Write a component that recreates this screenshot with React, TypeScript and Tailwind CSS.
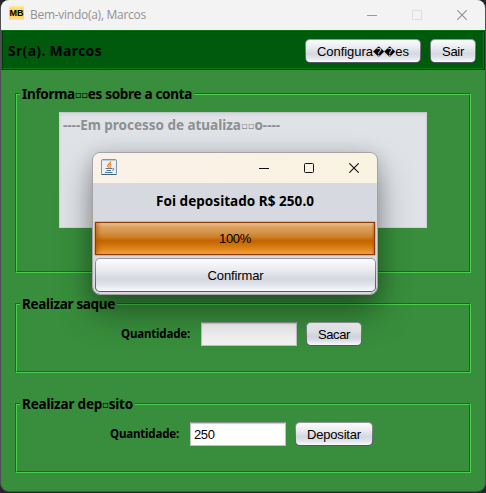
import { useLayoutEffect, useRef, type ReactNode } from 'react';

const TREB = "font-['Noto_Sans','Open_Sans',sans-serif] font-bold";
const ARIAL = "font-['Liberation_Sans','DejaVu_Sans',sans-serif]";

/* Spreads a label's characters over a given width in pixels. */
function Fit({ width, chars, className = '', children }: { width: number; chars: number; className?: string; children: ReactNode }) {
  const ref = useRef<HTMLSpanElement>(null);
  useLayoutEffect(() => {
    const el = ref.current;
    if (!el) return;
    const apply = () => {
      el.style.letterSpacing = '0px';
      const natural = el.getBoundingClientRect().width;
      el.style.letterSpacing = `${(width - natural) / chars}px`;
    };
    apply();
    document.fonts.ready.then(apply);
  }, [width, chars]);
  return (
    <span ref={ref} className={`inline-block whitespace-pre ${className}`}>
      {children}
    </span>
  );
}

const Tofu = () => <span className="align-[1px] font-['DejaVu_Sans'] text-[10px] leading-none font-bold">▫</span>;

function Button({ className = '', children }: { className?: string; children: ReactNode }) {
  return (
    <button
      className={`flex shrink-0 items-center justify-center rounded-[5px] bg-linear-to-b from-[#96999f] to-[#53565e] p-px ${ARIAL} text-[13px] leading-none text-black ${className}`}
    >
      <span className="flex h-full w-full items-center justify-center rounded-[4px] bg-[linear-gradient(#fcfcfd_0%,#e9ebef_35%,#d5d8e0_62%,#dee1e8_78%,#f8fafd_100%)]">
        {children}
      </span>
    </button>
  );
}

function Group({ title, className = '', children }: { title: ReactNode; className?: string; children?: ReactNode }) {
  return (
    <section className={`w-[456px] shrink-0 border border-t-[#246328] border-r-[#4bce50] border-b-[#4bce50] border-l-[#246328] ${className}`}>
      <div className="h-full border border-t-[#4bce50] border-r-[#246328] border-b-[#246328] border-l-[#4bce50]">
        <h2 className={`-mt-[11px] ml-[3px] flex h-5 w-max items-center bg-[#388e3c] px-[2px] text-[13.5px] leading-5 ${TREB}`}>{title}</h2>
        {children}
      </div>
    </section>
  );
}

function Field({ value = '', className = '' }: { value?: string; className?: string }) {
  return (
    <div className={`flex h-6 w-24 items-center border border-[#c0c1c4] border-t-[#8d8e91] pl-[3px] text-[13px] leading-none shadow-[inset_0_1px_1px_#c9cacc] ${ARIAL} ${className}`}>
      {value && <Fit width={20.5} chars={3}>{value}</Fit>}
    </div>
  );
}

function JavaIcon() {
  return (
    <svg className="-mt-px h-4 w-4" viewBox="0 0 16 16" fill="none">
      <rect x=".5" y=".5" width="15" height="15" rx="1" fill="#edf1f4" stroke="#7d95a6" />
      <path d="M1 1.500h14" stroke="#c3ced6" />
      <path d="M.5 15.500h15" stroke="#3f627b" />
      <path d="M9.600 2.500C9.800 4.500 6.200 5 6.700 7c.2.800.8 1 1 1.600M10.300 5C8.600 5.800 8.800 6.500 9.200 7.200c.3.600 0 1-.500 1.300" stroke="#e8791b" strokeWidth="1.200" />
      <path d="M4.500 9.500h6.500M5.500 11.500h4.500M11.500 9.500c1.900-.600 2.200 1.200-.300 1.800M4 13.500h7.500" stroke="#527997" />
    </svg>
  );
}

function Dialog() {
  return (
    <div className="absolute top-[152px] left-[92px] h-[143px] w-[286px] overflow-hidden rounded-[8px] border border-[#a5a4a3] bg-[#d6d9e0] bg-clip-padding shadow-[0_18px_34px_rgba(0,0,0,0.36),0_2px_18px_rgba(0,0,0,0.17)]">
      <div className="flex h-[30px] items-center bg-linear-to-r from-[#faf1e8] to-[#f9f3e1] pr-[18px] pb-px pl-2">
        <JavaIcon />
        <svg className="mr-[35px] ml-auto h-[10px] w-[10px]" viewBox="0 0 10 10"><path d="M0 5.500h10" stroke="#111" /></svg>
        <svg className="mr-[35px] h-[10px] w-[10px]" viewBox="0 0 10 10"><rect x=".5" y=".5" width="9" height="9" rx="1" fill="none" stroke="#111" /></svg>
        <svg className="h-[10px] w-[10px]" viewBox="0 0 10 10"><path d="m.3.300 9.400 9.400m0-9.400-9.400 9.400" stroke="#111" strokeWidth="1.100" /></svg>
      </div>
      <div className={`flex h-[37px] items-center justify-center text-[13.5px] ${TREB}`}>
        <Fit width={158} chars={23}>Foi depositado R$ 250.0</Fit>
      </div>
      <div className="mx-px mt-px h-[35px] rounded-[2px] bg-[#d6b591] p-px">
        <div className={`flex h-[33px] items-center justify-center border border-[#8f3c03] bg-[linear-gradient(#edc99f_0%,#dba363_12%,#d49447_30%,#ce7e24_46%,#c46400_57%,#cd7308_70%,#e58b23_88%,#faa944_100%)] text-[13px] shadow-[inset_4px_0_4px_-2px_rgba(170,75,0,0.6),inset_-2px_0_2px_-1px_rgba(170,75,0,0.5)] ${ARIAL}`}>
          <Fit width={32} chars={4}>100%</Fit>
        </div>
      </div>
      <Button className="mr-px ml-[2px] mt-[2px] h-[34px] w-[281px]"><Fit width={56} chars={9}>Confirmar</Fit></Button>
    </div>
  );
}

export default function App() {
  return (
    <div className="relative h-[493px] w-[486px] overflow-hidden bg-[#25232e] text-black">
      <div className="h-[492px] rounded-[9px] border-x border-[#504f54] bg-[#504f54]">
        <main className="flex h-[491px] flex-col overflow-hidden rounded-[8px] bg-[#388e3c]">
          <header className="flex h-[30px] shrink-0 items-center bg-[#f3f3f3] pr-[18px] pb-px pl-2">
            <div className="mb-[3px] flex h-[14px] w-[15px] items-center justify-center bg-linear-to-b from-[#ffe9a0] via-[#fbc618] to-[#ffe38c] font-['Liberation_Sans',sans-serif] text-[9px] leading-none font-bold">MB</div>
            <Fit width={116} chars={20} className="ml-[6px] pt-px font-['Open_Sans',sans-serif] text-[12px] leading-[28px] text-[#929292]">Bem-vindo(a), Marcos</Fit>
            <svg className="mr-[35px] ml-auto h-[10px] w-[10px]" viewBox="0 0 10 10"><path d="M0 5.500h10" stroke="#999" /></svg>
            <svg className="mr-[35px] h-[10px] w-[10px]" viewBox="0 0 10 10"><rect x=".5" y=".5" width="9" height="9" rx=".5" fill="none" stroke="#dedede" /></svg>
            <svg className="h-[10px] w-[10px]" viewBox="0 0 10 10"><path d="m.3.300 9.400 9.400m0-9.400-9.400 9.400" stroke="#929292" strokeWidth="1.200" /></svg>
          </header>
          <div className="h-10 shrink-0 border border-t-[#007a11] border-r-[#003f09] border-b-[#003f09] border-l-[#007a11]">
            <div className="flex h-full items-center border border-t-[#003f09] border-r-[#007a11] border-b-[#007a11] border-l-[#003f09] bg-[#005a0d] pr-[7px] pl-[5px]">
              <Fit width={94} chars={13} className={`mr-auto pt-px text-[14px] leading-6 ${TREB}`}>Sr(a). Marcos</Fit>
              <Button className="mt-[2px] h-6 w-[116px]">
                <Fit width={92} chars={13}>Configura<span className="font-['DejaVu_Sans'] text-[11px]">��</span>es</Fit>
              </Button>
              <Button className="mt-[2px] ml-[9px] h-6 w-[46px]"><Fit width={22} chars={4}>Sair</Fit></Button>
            </div>
          </div>
          <Group className="mt-[23px] ml-[14px] h-[180px]" title={<Fit width={170} chars={25}>Informa<Tofu /><Tofu />es sobre a conta</Fit>}>
            <div className={`mt-[8px] ml-[42px] h-[116px] w-[368px] border border-[#d0d3d8] border-t-[#c4c7cb] bg-[#dfe2e7] px-[3px] pt-[2px] text-[13.5px] leading-5 text-[#8e8f91] shadow-[inset_0_2px_3px_rgba(0,0,0,0.06)] ${TREB}`}>
              <Fit width={217} chars={34}>----Em processo de atualiza<Tofu /><Tofu />o----</Fit>
            </div>
          </Group>
          <Group className="mt-[30px] ml-[14px] h-[70px]" title={<Fit width={93} chars={14}>Realizar saque</Fit>}>
            <div className={`mt-[8px] ml-[104px] flex items-center text-[11.5px] ${TREB}`}>
              <Fit width={69} chars={11}>Quantidade:</Fit>
              <Field className="ml-[11px] bg-[#f3f3f3] font-normal" />
              <Button className="ml-[9px] h-6 w-14 font-normal"><Fit width={32} chars={5}>Sacar</Fit></Button>
            </div>
          </Group>
          <Group className="mt-[30px] ml-[14px] h-[70px]" title={<Fit width={111} chars={17}>Realizar dep<Tofu />sito</Fit>}>
            <div className={`mt-[8px] ml-[93px] flex items-center text-[11.5px] ${TREB}`}>
              <Fit width={69} chars={11}>Quantidade:</Fit>
              <Field value="250" className="ml-[11px] bg-white font-normal" />
              <Button className="ml-[9px] h-6 w-[78px] font-normal"><Fit width={54} chars={9}>Depositar</Fit></Button>
            </div>
          </Group>
        </main>
      </div>
      <Dialog />
    </div>
  );
}
